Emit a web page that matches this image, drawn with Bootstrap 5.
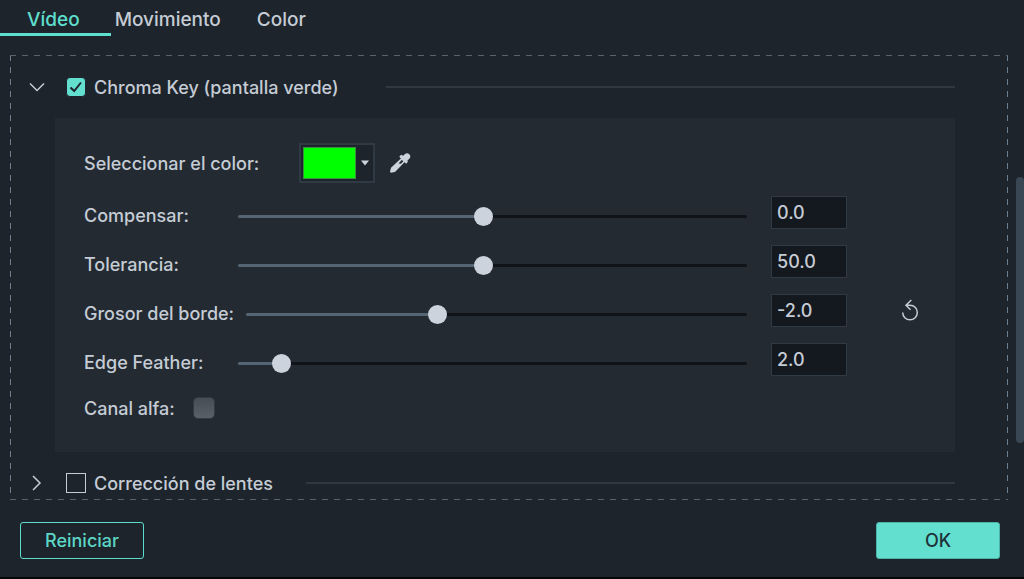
<!DOCTYPE html>
<html lang="es">
<head>
<meta charset="utf-8">
<meta name="viewport" content="width=device-width, initial-scale=1">
<title>Vídeo</title>
<link href="https://cdn.jsdelivr.net/npm/bootstrap@5.3.0/dist/css/bootstrap.min.css" rel="stylesheet">
<style>
  :root { --ink: #c5ccd5; --accent: #5fdfcd; --base: #1d242b; --panel: #232a32; --edge: #303a45; }
  body { background: var(--base); color: var(--ink); font-family: Inter, "Liberation Sans", sans-serif; font-size: 18px; font-weight: 500; line-height: 24px; border-bottom: 2px solid #050709; }
  .tab-strip .nav-link { color: var(--ink); font-size: 19px; padding: 8px 18px 2px; border-bottom: 3px solid transparent; line-height: 23px; }
  .tab-strip .nav-link.active { color: var(--accent); border-color: var(--accent); padding-left: 27px; padding-right: 31px; }
  .tab-strip .nav-link.after-active { padding-left: 4px; }
  .page-body { padding-top: 19px; }
  .dashed {
    --h: repeating-linear-gradient(90deg, #57646f 0 6px, transparent 6px 12px);
    --v: repeating-linear-gradient(180deg, #6b7f90 0 6px, transparent 6px 12px);
    background: var(--h) top / 100% 1px no-repeat, var(--h) bottom / 100% 1px no-repeat, var(--v) left / 1px 100% no-repeat, var(--v) right / 1px 100% no-repeat;
    margin-left: 10px; padding-top: 15px;
  }
  .section-head { height: 34px; padding-left: 18px; padding-right: 53px; }
  .section-head label, .setting label { flex: none; white-space: nowrap; }
  .section-head label { padding-top: 2px; }
  .fold { width: 18px; height: 18px; padding: 0; border: 0; margin-right: 20px; color: var(--ink); display: flex; }
  .section-head .form-check-input { width: 20px; height: 20px; margin: 0 8px 0 0; border: 1px solid var(--ink); border-radius: 0; background-color: transparent; }
  .section-head .form-check-input:checked { border-color: var(--base); border-radius: 4px; background-color: #63dfd0; background-size: 20px;
    background-image: url("data:image/svg+xml,%3Csvg xmlns='http://www.w3.org/2000/svg' viewBox='0 0 20 20'%3E%3Cpath d='M4.5 10.5 8.2 14 15 5.5' fill='none' stroke='%231d242b' stroke-width='2'/%3E%3C/svg%3E"); }
  .rule { height: 2px; background: #303841; }
  .rule-wide { margin-left: 47px; }
  .rule-near { margin-left: 33px; }
  .settings { background: var(--panel); margin: 14px 53px 14px 45px; padding: 25px 0 26px 29px; }
  .swatch { width: 76px; height: 40px; border: 2px solid var(--edge); background: var(--base); padding: 0 0 0 2px; }
  .swatch-fill { width: 53px; height: 32px; background: #00ff00; border: 1px solid #3b8f3f; }
  .color-row { margin-bottom: 13px; }
  .color-row label { width: 215px; padding-top: 2px; }
  .pick { width: 24px; height: 24px; margin-left: 13px; padding: 0; border: 0; background: none; display: flex; }
  .slider-row { height: 49px; }
  .slider-row label { min-width: 154px; padding-right: 12px; line-height: 40px; }
  .slider-row .form-range { height: 40px; min-width: 0; }
  .form-range::-webkit-slider-runnable-track { height: 3px; border-radius: 2px; background: linear-gradient(90deg, #566573 var(--fill), #101317 var(--fill)); }
  .form-range::-webkit-slider-thumb { width: 19px; height: 19px; margin-top: -8px; background: #ccd3dd; box-shadow: none; }
  .form-range::-moz-range-track { height: 3px; background: linear-gradient(90deg, #566573 var(--fill), #101317 var(--fill)); }
  .slider-row .number { flex: none; width: 76px; height: 33px; margin-left: 24px; padding: 0 5px; border: 1px solid var(--edge); border-radius: 0; background: #14181f; color: var(--ink); font-size: 18px; font-weight: 500; }
  .tail { flex: none; width: 108px; height: 33px; padding-left: 17px; }
  .undo { padding: 0; border: 0; background: none; color: var(--ink); display: flex; }
  .alpha-row { height: 34px; }
  .alpha-row .form-check-input { width: 22px; height: 22px; margin: 0 0 2px 18px; border: 1px solid #343b43; border-radius: 5px; background: linear-gradient(#464d55, #596068); }
  .rail { width: 8px; margin-left: 8px; padding-top: 122px; }
  .rail-thumb { height: 266px; border-radius: 4px; background: #394653; }
  .actions { padding: 22px 24px 18px 20px; }
  .actions .btn { width: 124px; height: 37px; padding: 0; border-radius: 3px; font-size: 18px; font-weight: 500; }
  .btn-line { border: 1px solid #5cdccb; color: #5cd6c5; }
  .btn-fill, .btn-fill:hover { background: #63dfd0; color: #1d3238; border: 1px solid #4bb5a9; }
</style>
</head>
<body class="min-vh-100 d-flex flex-column">
<nav class="nav tab-strip flex-nowrap" aria-label="Propiedades">
  <a class="nav-link active" href="#video" aria-current="page">Vídeo</a>
  <a class="nav-link after-active" href="#movimiento">Movimiento</a>
  <a class="nav-link" href="#color">Color</a>
</nav>

<main class="page-body d-flex flex-grow-1" id="video">
  <div class="dashed flex-grow-1">
    <div class="section-head d-flex align-items-center">
      <button class="fold btn" type="button" aria-label="Contraer"><svg width="18" height="18" viewBox="0 0 18 18" fill="none" stroke="currentColor" stroke-width="1.5"><path d="m2 5.500 7 7 7-7"/></svg></button>
      <input class="form-check-input" type="checkbox" id="chroma" checked>
      <label for="chroma">Chroma Key (pantalla verde)</label>
      <div class="rule rule-wide flex-grow-1"></div>
    </div>

    <section class="settings">
      <div class="setting color-row d-flex align-items-center">
        <label for="keyColor">Seleccionar el color:</label>
        <button class="swatch d-flex align-items-center" type="button" id="keyColor">
          <span class="swatch-fill"></span>
          <svg class="ms-1" width="10" height="6" viewBox="0 0 10 6"><path d="M1 .5h8L5 5.500z" fill="#ccd3dd"/></svg>
        </button>
        <button class="pick" type="button" aria-label="Cuentagotas">
          <svg width="24" height="24" viewBox="0 0 24 24"><path fill="#ccd3dd" fill-rule="evenodd" d="M15.200 4.800 17 3a3.200 3.200 0 0 1 4.500 4.500l-2.200 2.200.7.800-1.700 2.200-1.800-1.500L7 20.900l-4.200.9-.8-1 1-4L12.900 7.500l-1.600-1.700L13 3.700zM14 8.700l-3.500 3.700 2.400.3 2.300-2.300z"/></svg>
        </button>
      </div>

      <div class="setting slider-row d-flex align-items-start">
        <label for="offset">Compensar:</label>
        <input class="form-range" type="range" id="offset" min="0" max="100" step="0.1" value="48.2" style="--fill:48.2%">
        <input class="number" type="text" value="0.0" aria-label="Valor de compensar">
        <div class="tail"></div>
      </div>
      <div class="setting slider-row d-flex align-items-start">
        <label for="tolerance">Tolerancia:</label>
        <input class="form-range" type="range" id="tolerance" min="0" max="100" step="0.1" value="48.2" style="--fill:48.2%">
        <input class="number" type="text" value="50.0" aria-label="Valor de tolerancia">
        <div class="tail"></div>
      </div>
      <div class="setting slider-row d-flex align-items-start">
        <label for="edge">Grosor del borde:</label>
        <input class="form-range" type="range" id="edge" min="0" max="100" step="0.1" value="37.8" style="--fill:37.8%">
        <input class="number" type="text" value="-2.0" aria-label="Valor de grosor del borde">
        <div class="tail d-flex align-items-center justify-content-center">
          <button class="undo" type="button" aria-label="Restablecer"><svg width="18" height="24" viewBox="0 0 18 24" fill="none" stroke="currentColor" stroke-width="1.500"><path d="M1.700 13.500A7.300 7.300 0 1 0 9 6.200H5M10.300 1 5 6.200l4.500 4.500"/></svg></button>
        </div>
      </div>
      <div class="setting slider-row d-flex align-items-start">
        <label for="feather">Edge Feather:</label>
        <input class="form-range" type="range" id="feather" min="0" max="100" step="0.1" value="6.900" style="--fill:6.9%">
        <input class="number" type="text" value="2.0" aria-label="Valor de edge feather">
        <div class="tail"></div>
      </div>

      <div class="setting alpha-row d-flex align-items-center">
        <label for="alpha">Canal alfa:</label>
        <input class="form-check-input" type="checkbox" id="alpha">
      </div>
    </section>

    <div class="section-head d-flex align-items-center">
      <button class="fold btn" type="button" aria-label="Expandir"><svg width="18" height="18" viewBox="0 0 18 18" fill="none" stroke="currentColor" stroke-width="1.500"><path d="m5 2 7 7-7 7"/></svg></button>
      <input class="form-check-input" type="checkbox" id="lens">
      <label for="lens">Corrección de lentes</label>
      <div class="rule rule-near flex-grow-1"></div>
    </div>
  </div>
  <div class="rail"><div class="rail-thumb"></div></div>
</main>

<footer class="actions d-flex justify-content-between">
  <button class="btn btn-line" type="button">Reiniciar</button>
  <button class="btn btn-fill" type="button">OK</button>
</footer>
<script src="https://cdn.jsdelivr.net/npm/bootstrap@5.3.0/dist/js/bootstrap.bundle.min.js"></script>
</body>
</html>
